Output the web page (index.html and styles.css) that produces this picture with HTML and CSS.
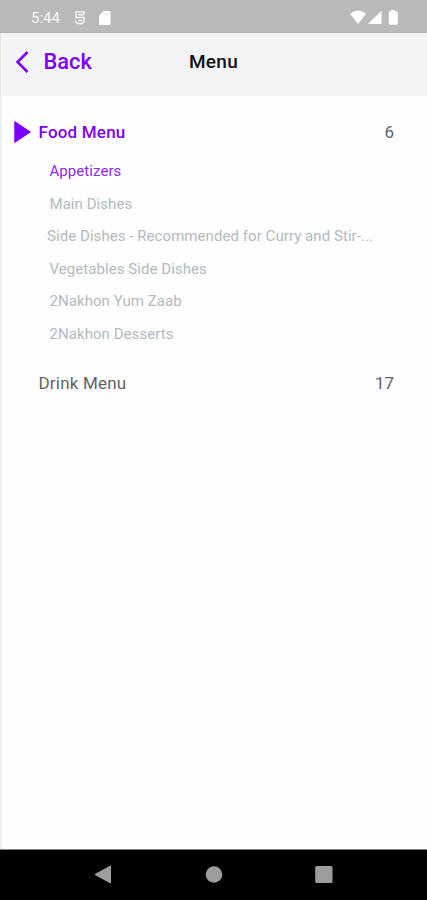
FILE: index.html
```html
<!DOCTYPE html>
<html lang="en">
<head>
<meta charset="utf-8">
<title>Menu</title>
<link rel="stylesheet" href="styles.css">
</head>
<body>
<div class="status">
  <span class="time">5:44</span>
  <svg class="usb" width="12" height="14" viewBox="0 0 12 14" fill="none" stroke="#f4f4f4" stroke-width="1.500"><path d="M10 3.500V1H2V6.500H10V9Q10 12.700 6 12.700T1.500 9.500M4 3.700H10M4 9.500H8"/></svg>
  <svg class="card-icon" width="12" height="14" viewBox="0 0 12 14"><path d="M4.500 0H10Q11.500 0 11.500 1.500V12.500Q11.500 14 10 14H1.500Q0 14 0 12.500V4.500Z" fill="#fff"/><path d="M5 2V4M7 2V4M9 2V4" stroke="#e2e2e2"/></svg>
  <svg class="signals" width="50" height="16" viewBox="0 0 50 16" fill="#fff"><path d="M0 3.800Q8-2.800 16 3.800L8 14ZM18 14L31.500 .8V14Z"/><path d="M41 0H45V1.200H46Q47.800 1.200 47.800 3V13Q47.800 14.700 46 14.700H40.500Q38.700 14.700 38.700 13V3Q38.700 1.200 40.500 1.200H41Z"/></svg>
</div>
<header class="header">
  <div class="back">
    <svg width="14" height="22" viewBox="0 0 14 22" fill="none" stroke="#7d00fa" stroke-width="2.500"><path d="M12.500 1L2.500 11L12.500 21"/></svg>
    <span>Back</span>
  </div>
  <h1 class="title">Menu</h1>
</header>
<main class="content">
  <div class="group active">
    <svg class="marker" width="17" height="22" viewBox="0 0 17 22"><path d="M1 1L16 11L1 21Z" fill="#7d00ff" stroke="#7d00ff" stroke-width="1.500" stroke-linejoin="round"/></svg>
    <span class="name">Food Menu</span><span class="count">6</span>
  </div>
  <ul class="items">
    <li class="selected">Appetizers</li>
    <li>Main Dishes</li>
    <li class="long">Side Dishes - Recommended for Curry and Stir-...</li>
    <li>Vegetables Side Dishes</li>
    <li>2Nakhon Yum Zaab</li>
    <li>2Nakhon Desserts</li>
  </ul>
  <div class="group drinks"><span class="name">Drink Menu</span><span class="count">17</span></div>
</main>
<nav class="nav">
  <svg width="427" height="50" viewBox="0 0 427 50" fill="#9d9d9d"><path d="M95 24.500L110.500 16V33Z" stroke="#9d9d9d" stroke-linejoin="round"/><circle cx="214" cy="24.500" r="8.300"/><rect x="315.200" y="16" width="17.300" height="17" rx="1.500"/></svg>
</nav>
</body>
</html>
```
FILE: styles.css
```css
* { box-sizing: border-box; }
body {
  margin: 0;
  height: 900px;
  display: flex;
  flex-direction: column;
  background: #fefefe;
  font-family: Roboto, "Liberation Sans", sans-serif;
  overflow: hidden;
}
.status {
  height: 33px;
  background: #bababa;
  border-bottom: 1px solid #b3b3b3;
  display: flex;
  align-items: flex-start;
  padding: 10px 0 0 31px;
  color: #f8f8f8;
}
.time { width: 43px; font-size: 15px; line-height: 17px; }
.usb { margin-top: 1px; }
.card-icon { margin: 1px 0 0 13px; }
.signals { margin-left: 239px; }
.header {
  height: 63px;
  background: #f3f4f6;
  border-left: 1px solid #e6e7e9;
  display: grid;
  grid-template-columns: 1fr auto 1fr;
  align-items: start;
}
.back {
  display: flex;
  align-items: center;
  gap: 14.5px;
  padding: 17px 0 0 14px;
  height: 40px;
  font-size: 21.8px;
  font-weight: 500;
  line-height: 24px;
  color: #7d00fa;
}
.title {
  margin: 17px 0 0 -1px;
  font-size: 19px;
  font-weight: 500;
  line-height: 24px;
  letter-spacing: 0.3px;
  color: #111;
}
.content {
  flex: 1;
  border-left: 2px solid #efeff0;
  padding: 24px 33px 0 12px;
}
.group {
  display: flex;
  align-items: center;
  height: 24px;
  font-size: 17px;
  color: #626266;
}
.marker { margin-right: 7.5px; }
.name { letter-spacing: 0.2px; }
.active .name { color: #7d00fa; font-weight: 500; }
.count { margin-left: auto; }
.items {
  list-style: none;
  margin: 11px 0 0;
  padding: 0 0 0 35.5px;
  font-size: 15px;
  line-height: 32.6px;
  letter-spacing: 0.06px;
  white-space: nowrap;
  color: #b2babf;
}
.selected { color: #8b2bf0; }
.long { margin-left: -2.5px; }
.drinks { margin-top: 20px; padding-left: 24.5px; }
.nav { height: 51px; background: #000; border-top: 1px solid #858585; }
.nav svg { display: block; }
```
